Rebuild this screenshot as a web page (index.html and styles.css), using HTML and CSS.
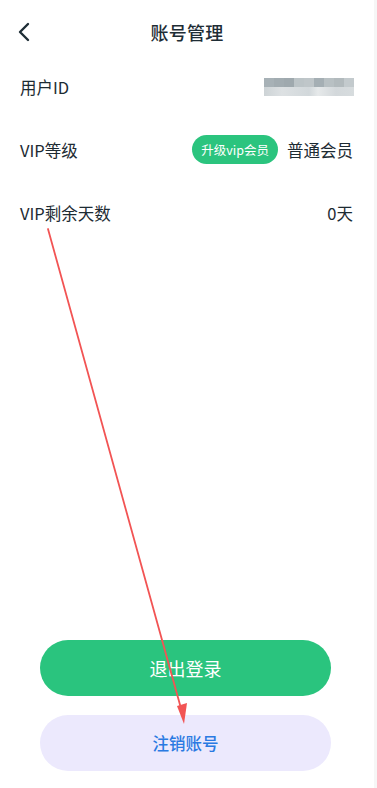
FILE: index.html
```html
<!DOCTYPE html>
<html lang="zh-CN">
<head>
<meta charset="utf-8">
<title>账号管理</title>
<link rel="stylesheet" href="styles.css">
</head>
<body>
<div class="page">
  <header class="header">
    <svg class="back" width="14" height="20" viewBox="0 0 14 20"><path d="M11 2 L3 10 L11 18" fill="none" stroke="#1e2d35" stroke-width="2.4" stroke-linecap="round" stroke-linejoin="round"/></svg>
    <h1 class="title">账号管理</h1>
  </header>
  <div class="rows">
    <div class="row">
      <span class="label">用户ID</span>
      <span class="blur-id">
        <span class="px a"></span><span class="px b"></span><span class="px c"></span><span class="px d"></span><span class="px e"></span><span class="px f"></span><span class="px g"></span><span class="px h"></span><span class="px i"></span>
      </span>
    </div>
    <div class="row">
      <span class="label">VIP等级</span>
      <span class="value-group"><span class="badge">升级vip会员</span><span class="value">普通会员</span></span>
    </div>
    <div class="row">
      <span class="label">VIP剩余天数</span>
      <span class="value">0天</span>
    </div>
  </div>
  <div class="actions">
    <button class="btn btn-primary">退出登录</button>
    <button class="btn btn-secondary">注销账号</button>
  </div>
  <svg class="annot" width="377" height="788" viewBox="0 0 377 788">
    <line x1="48" y1="229" x2="182" y2="712" stroke="#f25454" stroke-width="1.8" stroke-linecap="round"/>
    <path d="M177 706 L184 724 L187 703 Z" fill="#f25454"/>
  </svg>
</div>
</body>
</html>
```
FILE: styles.css
```css
* { box-sizing: border-box; }
html, body { margin: 0; padding: 0; }
body {
  background: #f6f6f6;
  font-family: "Noto Sans CJK SC", "Noto Sans", sans-serif;
  color: #1d2b33;
}
.page {
  position: relative;
  width: 374px;
  height: 788px;
  background: #ffffff;
  display: flex;
  flex-direction: column;
}
.header {
  height: 56px;
  padding-top: 8px;
  position: relative;
  display: flex;
  align-items: center;
  justify-content: center;
}
.back {
  position: absolute;
  left: 17px;
  top: 22px;
}
.title {
  margin: 0;
  font-size: 18px;
  font-weight: 500;
  line-height: 48px;
  color: #1e2d35;
  letter-spacing: 0.3px;
}
.rows { display: flex; flex-direction: column; }
.row {
  height: 63px;
  padding: 0 21px 0 20px;
  display: flex;
  align-items: center;
  justify-content: space-between;
  font-size: 16.5px;
}
.row:first-child { padding-top: 0; margin-top: -1px; }
.label { font-size: 16.5px; color: #1d2b33; }
.value { font-size: 16.5px; color: #1d2b33; }
.value-group { display: flex; align-items: center; gap: 9px; }
.badge {
  background: #2bc47e;
  color: #ffffff;
  font-size: 12.5px;
  height: 29px;
  line-height: 29px;
  padding: 0 9px;
  border-radius: 15px;
}
.blur-id {
  display: grid;
  grid-template-columns: repeat(9, 10px);
  grid-template-rows: 9px 9px;
  margin-right: -1px;
}
.px { display: block; }
.blur-id .a { background: #a7b1b6; }
.blur-id .b { background: #a2acb1; }
.blur-id .c { background: #9fa9ae; }
.blur-id .d { background: #bcc4c7; }
.blur-id .e { background: #bfc6c9; }
.blur-id .f { background: #a5afb4; }
.blur-id .g { background: #b8c0c3; }
.blur-id .h { background: #b2babd; }
.blur-id .i { background: #c3cacd; }
.blur-id::after {
  content: "";
  grid-column: 1 / span 9;
  grid-row: 2;
  background: linear-gradient(90deg, #cdd3d6, #dde1e3 20%, #d2d8db 50%, #e6e9ea 60%, #d3d8db 80%, #d7dcde);
}
.actions {
  margin-top: auto;
  padding: 0 43px 17px 40px;
  display: flex;
  flex-direction: column;
  gap: 19px;
}
.btn {
  height: 56px;
  border: none;
  border-radius: 28px;
  font-family: inherit;
  width: 100%;
}
.btn-primary {
  background: #2ac47e;
  color: #ffffff;
  font-size: 18px;
}
.btn-secondary {
  background: #ece9fd;
  color: #2a7ae2;
  font-size: 16.5px;
  font-weight: 500;
}
.annot {
  position: absolute;
  left: 0;
  top: 0;
  pointer-events: none;
}
```
